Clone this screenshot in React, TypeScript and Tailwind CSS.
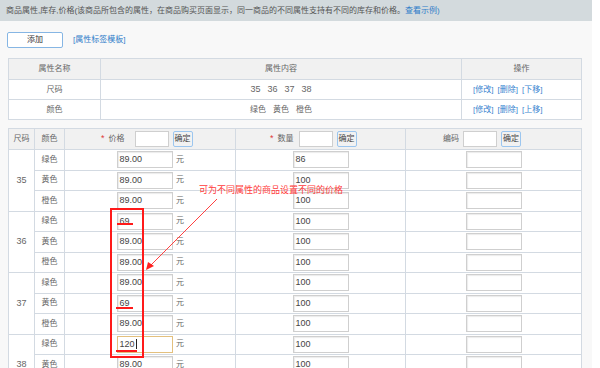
import React from 'react';

const sizes = [
  { size: '35', rows: [{ c: '绿色', p: '89.00', q: '86' }, { c: '黄色', p: '89.00', q: '100' }, { c: '橙色', p: '89.00', q: '100' }] },
  { size: '36', rows: [{ c: '绿色', p: '69', q: '100' }, { c: '黄色', p: '89.00', q: '100' }, { c: '橙色', p: '89.00', q: '100' }] },
  { size: '37', rows: [{ c: '绿色', p: '89.00', q: '100' }, { c: '黄色', p: '69', q: '100' }, { c: '橙色', p: '89.00', q: '100' }] },
  { size: '38', rows: [{ c: '绿色', p: '120', q: '100', focus: true }, { c: '黄色', p: '89.00', q: '100' }, { c: '橙色', p: '89.00', q: '100' }] },
];

const cell = 'border border-[#d3dae2] text-center';

function Field({ value, focus }: { value?: string; focus?: boolean }) {
  return (
    <div
      className={`w-[56px] h-[17px] bg-white border text-left pl-[2px] text-[9px] leading-[15px] text-[#444] flex items-center ${
        focus ? 'border-[#e3c07e]' : 'border-[#cfcfcf] shadow-[inset_1px_1px_1px_rgba(0,0,0,0.08)]'
      }`}
    >
      {value}
      {focus && <span className="w-px h-[10px] bg-[#222] ml-px" />}
    </div>
  );
}

function OkButton() {
  return (
    <span className="inline-flex items-center justify-center w-[20px] h-[16px] border border-[#9cc6ef] rounded-[2px] bg-[#f2f2f2] text-[8px] text-[#444]">
      确定
    </span>
  );
}

function HeadInput() {
  return <span className="inline-block w-[34px] h-[16px] bg-white border border-[#cfcfcf]" />;
}

function Ops({ last }: { last: string }) {
  return (
    <td className={`${cell} text-left pl-[11px] text-[#3a84cf]`}>
      <span className="space-x-[4px]">
        <span>[修改]</span>
        <span>[删除]</span>
        <span>[{last}]</span>
      </span>
    </td>
  );
}

export default function App() {
  return (
    <div className="w-[600px] bg-white font-['Liberation_Sans','Noto_Sans_CJK_SC',sans-serif]">
      <div className="relative w-[592px] bg-[#f8f8f8] pb-4">
        <div className="h-[21px] bg-[#d3dadd] pl-[6px] flex items-center text-[8px] text-[#555] whitespace-nowrap">
          商品属性,库存,价格(该商品所包含的属性，在商品购买页面显示，同一商品的不同属性支持有不同的库存和价格。
          <span className="text-[#2f7cc9]">查看示例)</span>
        </div>

        <div className="flex items-center gap-[10px] pl-[7px] mt-[11px]">
          <button className="w-[56px] h-[16px] bg-white border border-[#86b6e4] rounded-[2px] text-[8px] text-[#333]">添加</button>
          <span className="text-[8px] text-[#2f7cc9]">[属性标签模板]</span>
        </div>

        <table className="ml-[8px] mt-[10px] w-[573px] table-fixed border-collapse text-[8px] text-[#666]">
          <colgroup>
            <col className="w-[92px]" />
            <col className="w-[361px]" />
            <col className="w-[120px]" />
          </colgroup>
          <thead>
            <tr className="bg-[#f1f1f1] h-[21px]">
              <th className={`${cell} font-normal`}>属性名称</th>
              <th className={`${cell} font-normal`}>属性内容</th>
              <th className={`${cell} font-normal`}>操作</th>
            </tr>
          </thead>
          <tbody className="bg-white">
            <tr className="h-[20px]">
              <td className={cell}>尺码</td>
              <td className={cell}>
                <span className="text-[9px] space-x-[7px]">
                  <span>35</span>
                  <span>36</span>
                  <span>37</span>
                  <span>38</span>
                </span>
              </td>
              <Ops last="下移" />
            </tr>
            <tr className="h-[20px]">
              <td className={cell}>颜色</td>
              <td className={cell}>
                <span className="space-x-[7px]">
                  <span>绿色</span>
                  <span>黄色</span>
                  <span>橙色</span>
                </span>
              </td>
              <Ops last="上移" />
            </tr>
          </tbody>
        </table>

        <table className="ml-[8px] mt-[8px] w-[573px] table-fixed border-collapse text-[8px] text-[#666]">
          <colgroup>
            <col className="w-[26px]" />
            <col className="w-[30px]" />
            <col className="w-[171px]" />
            <col className="w-[170px]" />
            <col className="w-[176px]" />
          </colgroup>
          <thead>
            <tr className="bg-[#f1f1f1] h-[21px]">
              <th className={`${cell} font-normal`}>尺码</th>
              <th className={`${cell} font-normal`}>颜色</th>
              <th className={`${cell} font-normal`}>
                <div className="flex items-center pl-[36px] gap-[4px]">
                  <span className="text-[#e03a3a] text-[9px]">*</span>
                  <span className="mr-[6px]">价格</span>
                  <HeadInput />
                  <OkButton />
                </div>
              </th>
              <th className={`${cell} font-normal`}>
                <div className="flex items-center pl-[34px] gap-[4px]">
                  <span className="text-[#e03a3a] text-[9px]">*</span>
                  <span className="mr-[1px]">数量</span>
                  <HeadInput />
                  <OkButton />
                </div>
              </th>
              <th className={`${cell} font-normal`}>
                <div className="flex items-center pl-[37px] gap-[4px]">
                  <span>编码</span>
                  <HeadInput />
                  <OkButton />
                </div>
              </th>
            </tr>
          </thead>
          <tbody className="bg-white">
            {sizes.map((s) =>
              s.rows.map((r, i) => (
                <tr key={s.size + r.c} className="h-[20.5px]">
                  {i === 0 && (
                    <td rowSpan={3} className={`${cell} text-[9px]`}>
                      {s.size}
                    </td>
                  )}
                  <td className={cell}>{r.c}</td>
                  <td className={cell}>
                    <div className="flex items-center justify-center gap-[3px] pl-[1px]">
                      <Field value={r.p} focus={r.focus} />
                      <span className="w-[9px]">元</span>
                    </div>
                  </td>
                  <td className={cell}>
                    <div className="flex justify-center">
                      <Field value={r.q} />
                    </div>
                  </td>
                  <td className={cell}>
                    <div className="flex justify-center">
                      <Field />
                    </div>
                  </td>
                </tr>
              ))
            )}
          </tbody>
        </table>

        {/* annotation overlay */}
        <div className="absolute left-[199px] top-[184px] text-[9px] leading-[12px] text-[#ff3b3b] whitespace-nowrap">
          可为不同属性的商品设置不同的价格
        </div>
        <svg className="absolute left-0 top-0 pointer-events-none" width="600" height="368">
          <line x1="217" y1="199" x2="148" y2="268" stroke="#ff4040" strokeWidth="1" />
          <path d="M146 270 L148 262 L154 266 Z" fill="#ff2020" />
        </svg>
        <div className="absolute left-[110px] top-[208px] w-[34px] h-[150px] border-2 border-[#ff1a1a]" />
        <div className="absolute left-[117px] top-[223px] w-[16px] h-[2px] bg-[#ff1a1a]" />
        <div className="absolute left-[116px] top-[307px] w-[17px] h-[2px] bg-[#ff1a1a]" />
        <div className="absolute left-[116px] top-[350px] w-[21px] h-[2px] bg-[#ff1a1a]" />
      </div>
    </div>
  );
}
